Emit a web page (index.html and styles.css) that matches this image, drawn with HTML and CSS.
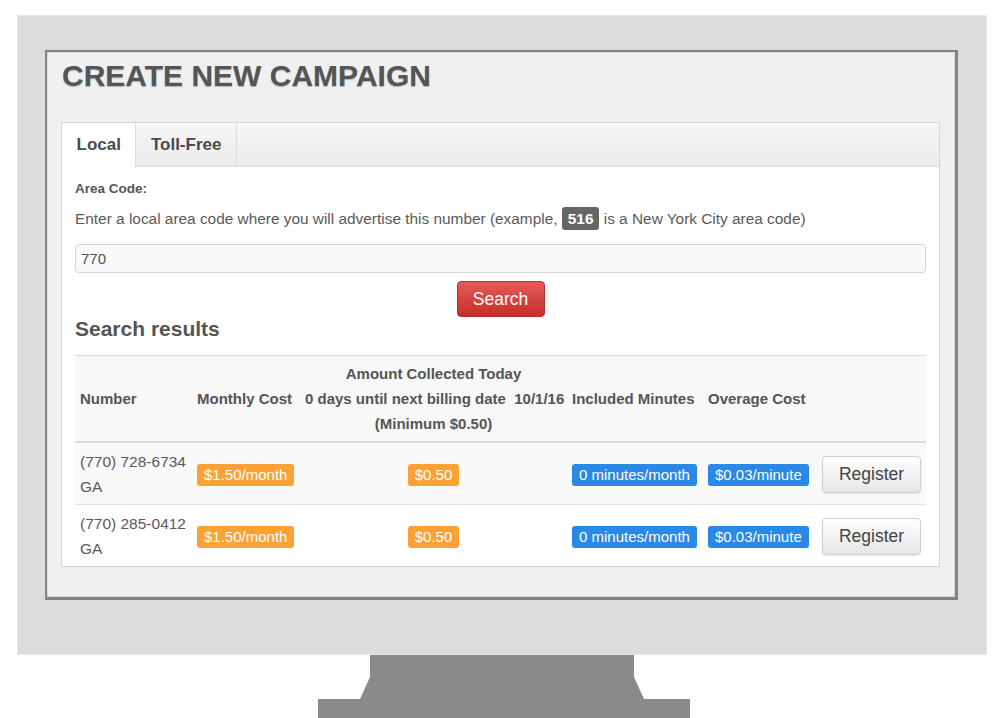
FILE: index.html
```html
<!DOCTYPE html>
<html lang="en">
<head>
    <meta charset="UTF-8">
    <title>Create New Campaign</title>
    <link rel="stylesheet" href="styles.css">
</head>
<body>
    <div class="monitor">
        <div class="screen">
            <h1 class="title">CREATE NEW CAMPAIGN</h1>
            <div class="card">
                <div class="tabs">
                    <span class="tab active">Local</span>
                    <span class="tab">Toll-Free</span>
                </div>
                <div class="pane">
                    <div class="field-label">Area Code:</div>
                    <p class="hint">Enter a local area code where you will advertise this number (example, <span class="code">516</span> is a New York City area code)</p>
                    <input class="area-input" type="text" value="770">
                    <div class="actions">
                        <button class="btn-search">Search</button>
                    </div>
                    <h2 class="results-title">Search results</h2>
                    <table class="results">
                        <colgroup>
                            <col style="width:117px">
                            <col style="width:108px">
                            <col style="width:267px">
                            <col style="width:136px">
                            <col style="width:114px">
                            <col style="width:109px">
                        </colgroup>
                        <thead>
                            <tr>
                                <th>Number</th>
                                <th>Monthly Cost</th>
                                <th class="center">Amount Collected Today<br>0 days until next billing date&nbsp; 10/1/16<br>(Minimum $0.50)</th>
                                <th>Included Minutes</th>
                                <th>Overage Cost</th>
                                <th></th>
                            </tr>
                        </thead>
                        <tbody>
                            <tr class="odd">
                                <td>(770) 728-6734<br>GA</td>
                                <td><span class="label orange">$1.50/month</span></td>
                                <td class="center"><span class="label orange">$0.50</span></td>
                                <td><span class="label blue">0 minutes/month</span></td>
                                <td><span class="label blue">$0.03/minute</span></td>
                                <td><button class="btn-register">Register</button></td>
                            </tr>
                            <tr>
                                <td>(770) 285-0412<br>GA</td>
                                <td><span class="label orange">$1.50/month</span></td>
                                <td class="center"><span class="label orange">$0.50</span></td>
                                <td><span class="label blue">0 minutes/month</span></td>
                                <td><span class="label blue">$0.03/minute</span></td>
                                <td><button class="btn-register">Register</button></td>
                            </tr>
                        </tbody>
                    </table>
                </div>
            </div>
        </div>
    </div>
    <svg class="stand" width="372" height="63" viewBox="0 0 372 63">
        <polygon points="52,0 316,0 316,22 326,44 372,44 372,63 0,63 0,44 42,44 52,22" fill="#8a8a8a"/>
    </svg>
</body>
</html>
```

FILE: styles.css
```css
*{
    margin: 0;
    padding: 0;
    box-sizing: border-box;
}
body{
    background: #fff;
    font-family: "Liberation Sans", Arial, sans-serif;
    color: #5a5a5a;
}
.monitor{
    margin: 15px 0 0 17px;
    width: 970px;
    height: 640px;
    padding: 34px 28px 0 27px;
    background: #dcdcdc;
    border: 1px solid #e8e8e8;
}
.screen{
    width: 913px;
    height: 550px;
    padding: 6px 15px 0 14px;
    background: #f0f0f0;
    border: 2px solid #7f8485;
    border-right-width: 3px;
    border-bottom-width: 3px;
    box-shadow: inset 0 0 0 1px #dadada;
}
.title{
    margin: 0 0 28px 1px;
    font-size: 30px;
    line-height: 36px;
    font-weight: bold;
    color: #555;
    text-shadow: 0 1px 1px rgba(0, 0, 0, .25);
}
.card{
    background: #fff;
    border: 1px solid #d6d6d6;
}
.tabs{
    display: flex;
    height: 44px;
    background: linear-gradient(#f7f7f7, #ebebeb);
    border-bottom: 1px solid #dcdcdc;
}
.tab{
    padding: 0 14.5px;
    line-height: 43px;
    font-size: 17px;
    font-weight: bold;
    color: #4a4a4a;
    border-right: 1px solid #dcdcdc;
}
.tab.active{
    background: #fff;
    height: 44px;
}
.pane{
    padding: 13px 13px 0;
}
.field-label{
    font-size: 13.5px;
    line-height: 18px;
    font-weight: bold;
    color: #555;
}
.hint{
    margin-top: 9px;
    font-size: 15.4px;
    line-height: 22px;
}
.code{
    display: inline-block;
    padding: 0 6px;
    line-height: 23px;
    background: #666;
    color: #fff;
    font-weight: bold;
    border-radius: 3px;
}
.area-input{
    display: block;
    width: 100%;
    height: 29px;
    margin-top: 14px;
    padding: 0 5px;
    font-family: inherit;
    font-size: 15px;
    color: #555;
    background: #fafafa;
    border: 1px solid #d4d4d4;
    border-radius: 4px;
}
.actions{
    margin-top: 8px;
    text-align: center;
}
.btn-search{
    width: 88px;
    height: 36px;
    font-family: inherit;
    font-size: 17.5px;
    color: #fff;
    background: linear-gradient(#e35c59, #c82d29);
    border: 1px solid #b8302c;
    border-radius: 4px;
}
.results-title{
    font-size: 21px;
    line-height: 24px;
    font-weight: bold;
    color: #555;
    margin-bottom: 14px;
}
.results{
    width: 851px;
    table-layout: fixed;
    border-collapse: collapse;
    font-size: 15px;
}
.results th{
    padding: 5px;
    line-height: 25px;
    text-align: left;
    font-weight: bold;
    color: #555;
    background: #f8f8f8;
    border-top: 1px solid #dcdcdc;
    border-bottom: 2px solid #dcdcdc;
    white-space: nowrap;
}
.results td{
    padding: 6px 5px 5px;
    line-height: 25px;
    font-size: 15.5px;
    vertical-align: middle;
    border-bottom: 1px solid #e2e2e2;
}
.results tbody tr:last-child td{
    border-bottom: none;
}
.results .odd td{
    background: #f9f9f9;
}
.results .center{
    text-align: center;
}
.label{
    display: inline-block;
    padding: 0 7px;
    line-height: 22px;
    font-size: 15px;
    color: #fff;
    border-radius: 3px;
}
.orange{
    background: #fca235;
}
.blue{
    background: #2a88e6;
}
.btn-register{
    width: 99px;
    height: 37px;
    font-family: inherit;
    font-size: 17.5px;
    color: #444;
    background: linear-gradient(#fff, #e6e6e6);
    border: 1px solid #cfcfcf;
    border-radius: 4px;
    box-shadow: 0 1px 2px rgba(0, 0, 0, .1);
    vertical-align: middle;
}
.stand{
    display: block;
    margin-left: 318px;
}
```
